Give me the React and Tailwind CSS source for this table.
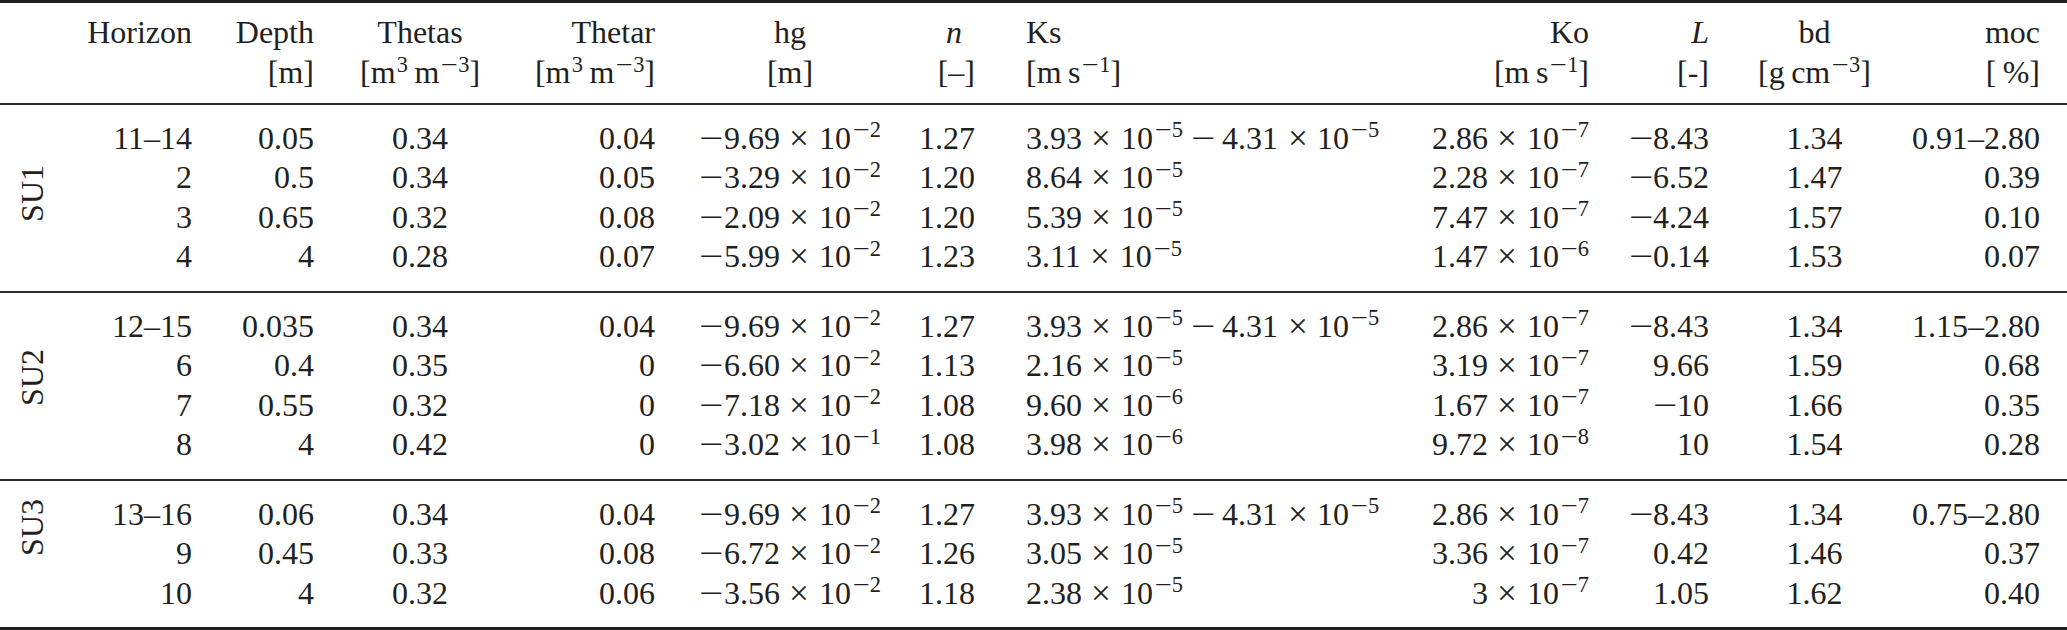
import React from 'react'

const cols =
  'grid grid-cols-[122px_122px_212px_129px_270px_50px_445px_169px_120px_211px_120px]'
const align = ['r', 'r', 'c', 'r', 'c', 'r', 'l', 'r', 'r', 'c', 'r']

// math-style minus: wider box and longer stroke than the text glyph
function Minus() {
  return (
    <span className="inline-block w-[0.78em] text-center">
      <span className="inline-block scale-x-[1.35]">−</span>
    </span>
  )
}

function Times() {
  return (
    <span className="inline-block w-[0.78em] mx-[0.22em] text-center">
      <span className="inline-block scale-[1.1]">×</span>
    </span>
  )
}

function Sup({ children }) {
  return <sup className="text-[0.7em] -top-[0.5em] ml-[0.06em]">{children}</sup>
}

function Sci({ neg, m, e }) {
  return (
    <span>
      {neg && <Minus />}
      {m}
      <Times />
      10
      <Sup>
        <Minus />
        {e}
      </Sup>
    </span>
  )
}

const s = (m, e) => <Sci m={m} e={e} />
const ns = (m, e) => <Sci neg m={m} e={e} />
const neg = (v) => (
  <span>
    <Minus />
    {v}
  </span>
)

const range = (
  <span>
    {s('3.93', '5')}
    <span className="mx-[0.22em]">
      <Minus />
    </span>
    {s('4.31', '5')}
  </span>
)

function Cell({ a, children }) {
  if (a === 'r')
    return (
      <div className="flex justify-end whitespace-nowrap">
        <span>{children}</span>
      </div>
    )
  if (a === 'c')
    return (
      <div className="flex justify-center whitespace-nowrap">
        <span>{children}</span>
      </div>
    )
  return (
    <div className="flex justify-start whitespace-nowrap pl-[51px]">
      <span>{children}</span>
    </div>
  )
}

function HeadCell({ a, top, unit }) {
  const side =
    a === 'r' ? 'items-end' : a === 'c' ? 'items-center' : 'items-start pl-[51px]'
  return (
    <div className={`flex flex-col whitespace-nowrap ${side}`}>
      <div className="h-[40px] leading-[40px]">{top}</div>
      <div className="h-[40px] leading-[40px]">{unit}</div>
    </div>
  )
}

const vol = (
  <>
    [m<Sup>3</Sup>
    {'\u2009'}m
    <Sup>
      <Minus />3
    </Sup>
    ]
  </>
)
const speed = (
  <>
    [m{'\u2009'}s
    <Sup>
      <Minus />1
    </Sup>
    ]
  </>
)

const headers = [
  ['Horizon', ''],
  ['Depth', '[m]'],
  ['Thetas', vol],
  ['Thetar', vol],
  ['hg', '[m]'],
  [<i className="mr-[13px]">n</i>, '[–]'],
  ['Ks', speed],
  ['Ko', speed],
  [<i>L</i>, '[-]'],
  [
    'bd',
    <>
      [g{'\u2009'}cm
      <Sup>
        <Minus />3
      </Sup>
      ]
    </>,
  ],
  ['moc', '[\u2009%]'],
]

const groups = [
  {
    label: 'SU1',
    offset: 'mt-[46px]',
    rows: [
      ['11–14', '0.05', '0.34', '0.04', ns('9.69', '2'), '1.27', range, s('2.86', '7'), neg('8.43'), '1.34', '0.91–2.80'],
      ['2', '0.5', '0.34', '0.05', ns('3.29', '2'), '1.20', s('8.64', '5'), s('2.28', '7'), neg('6.52'), '1.47', '0.39'],
      ['3', '0.65', '0.32', '0.08', ns('2.09', '2'), '1.20', s('5.39', '5'), s('7.47', '7'), neg('4.24'), '1.57', '0.10'],
      ['4', '4', '0.28', '0.07', ns('5.99', '2'), '1.23', s('3.11', '5'), s('1.47', '6'), neg('0.14'), '1.53', '0.07'],
    ],
  },
  {
    label: 'SU2',
    offset: 'mt-[42px]',
    rows: [
      ['12–15', '0.035', '0.34', '0.04', ns('9.69', '2'), '1.27', range, s('2.86', '7'), neg('8.43'), '1.34', '1.15–2.80'],
      ['6', '0.4', '0.35', '0', ns('6.60', '2'), '1.13', s('2.16', '5'), s('3.19', '7'), '9.66', '1.59', '0.68'],
      ['7', '0.55', '0.32', '0', ns('7.18', '2'), '1.08', s('9.60', '6'), s('1.67', '7'), neg('10'), '1.66', '0.35'],
      ['8', '4', '0.42', '0', ns('3.02', '1'), '1.08', s('3.98', '6'), s('9.72', '8'), '10', '1.54', '0.28'],
    ],
  },
  {
    label: 'SU3',
    offset: 'mt-[4px]',
    rows: [
      ['13–16', '0.06', '0.34', '0.04', ns('9.69', '2'), '1.27', range, s('2.86', '7'), neg('8.43'), '1.34', '0.75–2.80'],
      ['9', '0.45', '0.33', '0.08', ns('6.72', '2'), '1.26', s('3.05', '5'), s('3.36', '7'), '0.42', '1.46', '0.37'],
      ['10', '4', '0.32', '0.06', ns('3.56', '2'), '1.18', s('2.38', '5'), s('3', '7'), '1.05', '1.62', '0.40'],
    ],
  },
]

function Group({ label, offset, rows }) {
  return (
    <div className="flex py-[14px]">
      <div className="w-[70px] pr-[6px] flex justify-center items-start">
        <span className={`${offset} leading-none [writing-mode:vertical-rl] rotate-180`}>{label}</span>
      </div>
      <div className="flex flex-col">
        {rows.map((r, i) => (
          <div key={i} className={`${cols} h-[39.5px] leading-[39.5px]`}>
            {r.map((c, j) => (
              <Cell key={j} a={align[j]}>
                {c}
              </Cell>
            ))}
          </div>
        ))}
      </div>
    </div>
  )
}

export default function App() {
  return (
    <div className="w-[2067px] h-[630px] overflow-hidden bg-white text-[#231f20] text-[32px] font-['Liberation_Serif','Times_New_Roman',serif]">
      <div className="h-[3px] bg-[#231f20]" />
      <div className="flex pt-[9px] pb-[10.5px]">
        <div className="w-[70px]" />
        <div className={cols}>
          {headers.map(([top, unit], j) => (
            <HeadCell key={j} a={align[j]} top={top} unit={unit} />
          ))}
        </div>
      </div>
      <div className="h-[2px] bg-[#2b2b2b]" />
      <Group {...groups[0]} />
      <div className="h-[2px] bg-[#2b2b2b]" />
      <Group {...groups[1]} />
      <div className="h-[2px] bg-[#2b2b2b]" />
      <Group {...groups[2]} />
      <div className="h-[3px] bg-[#231f20]" />
    </div>
  )
}
